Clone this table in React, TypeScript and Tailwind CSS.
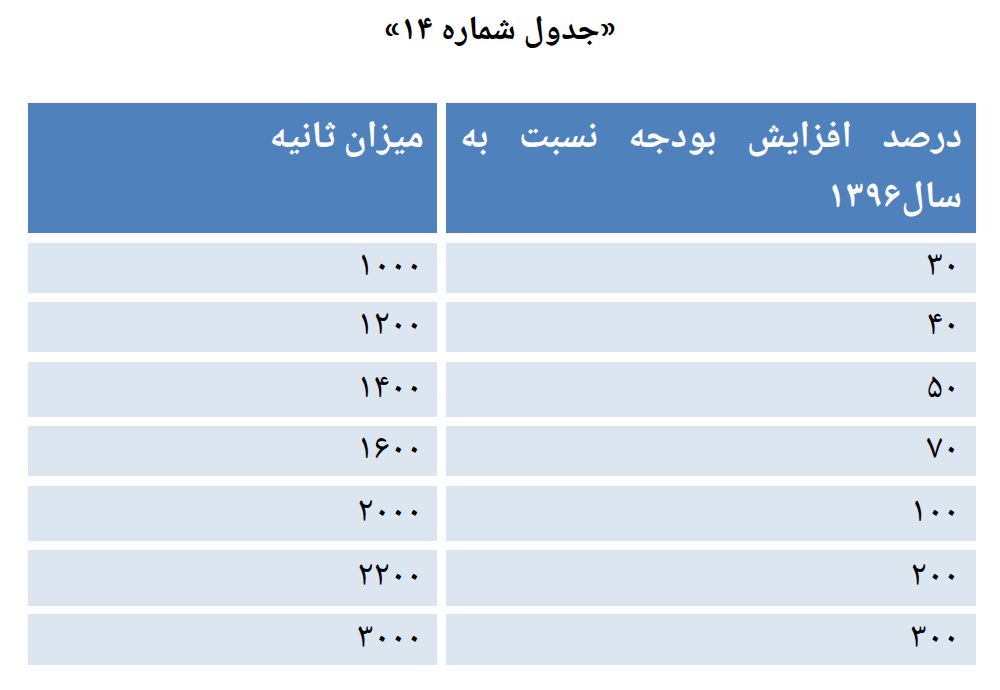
import React from "react";

const font = {
  fontFamily: '"Noto Naskh Arabic", "Noto Sans Arabic", "DejaVu Sans", sans-serif',
};

const rows: { a: string; b: string; cls: string }[] = [
  { a: "۳۰", b: "۱۰۰۰", cls: "mt-[10px] h-[50px]" },
  { a: "۴۰", b: "۱۲۰۰", cls: "mt-[9px] h-[50px]" },
  { a: "۵۰", b: "۱۴۰۰", cls: "mt-[10px] h-[55px]" },
  { a: "۷۰", b: "۱۶۰۰", cls: "mt-[9px] h-[50px]" },
  { a: "۱۰۰", b: "۲۰۰۰", cls: "mt-[10px] h-[55px]" },
  { a: "۲۰۰", b: "۲۲۰۰", cls: "mt-[9px] h-[56px]" },
  { a: "۳۰۰", b: "۳۰۰۰", cls: "mt-[8px] h-[51px]" },
];

export default function App() {
  return (
    <div className="w-[1000px] h-[690px] bg-white overflow-hidden" style={font} dir="rtl">
      <div className="h-[103px] pt-[12px] text-center">
        <div className="text-[34px] font-bold leading-[40px] text-black">«جدول شماره ۱۴»</div>
      </div>
      <div className="mr-[24px] w-[948px]">
        <div className="flex gap-x-[9px] h-[130px]">
          <div className="w-[530px] bg-[#4f81bd] pr-[14px] pl-[14px] pt-[6px] text-white font-bold text-[38px] leading-[60px]">
            <div className="text-justify [text-align-last:justify]">درصد افزایش بودجه نسبت به</div>
            <div className="text-right">سال۱۳۹۶</div>
          </div>
          <div className="w-[409px] bg-[#4f81bd] pr-[13px] pt-[6px] text-white font-bold text-[38px] leading-[60px]">
            میزان ثانیه
          </div>
        </div>
        {rows.map((r, i) => (
          <div key={i} className={"flex gap-x-[9px] " + r.cls}>
            <div className="w-[530px] bg-[#dce6f1] pr-[17px] flex items-center text-[36px] text-black">
              {r.a}
            </div>
            <div className="w-[409px] bg-[#dce6f1] pr-[15px] flex items-center text-[36px] text-black">
              {r.b}
            </div>
          </div>
        ))}
      </div>
    </div>
  );
}
